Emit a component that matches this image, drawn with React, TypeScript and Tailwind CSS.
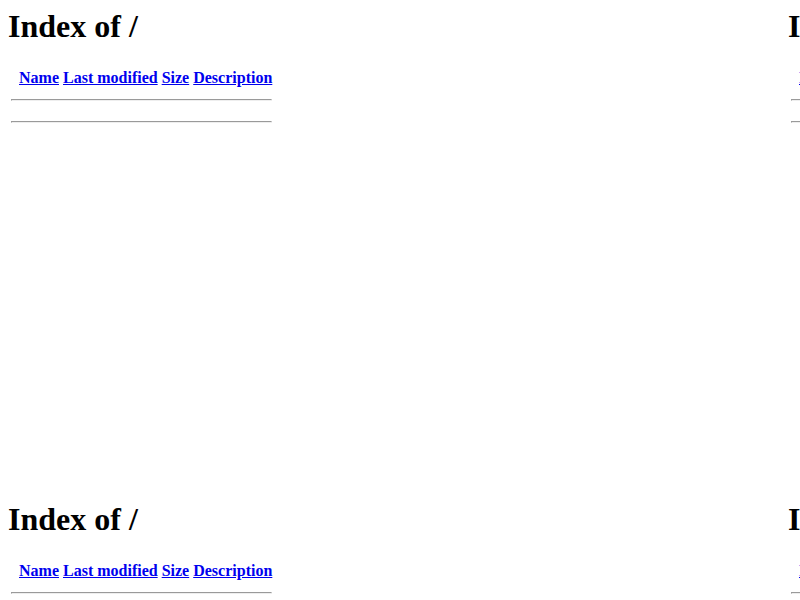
import React from "react";

function Tile() {
  const links = ["Name", "Last modified", "Size", "Description"];
  return (
    <div className="w-[780px] h-[493px] overflow-hidden p-[8px] bg-white text-black font-['Liberation_Serif','Times_New_Roman',serif] text-[16px] leading-[normal]">
      <h1 className="m-0 mb-[21.44px] text-[32px] font-bold leading-[normal]">Index of /</h1>
      <table className="border-separate border-spacing-[2px]">
        <tbody>
          <tr>
            <th className="p-[1px] align-top">
              <div className="w-[4px] h-[1px]" />
            </th>
            {links.map((l) => (
              <th key={l} className="p-[1px] font-bold">
                <a href="#" className="text-[#0000ee] underline">
                  {l}
                </a>
              </th>
            ))}
          </tr>
          <tr>
            <th colSpan={5} className="p-[1px]">
              <hr className="my-[8px] h-0 border border-solid border-t-[#9a9a9a] border-l-[#9a9a9a] border-b-[#eeeeee] border-r-[#eeeeee]" />
            </th>
          </tr>
          <tr>
            <th colSpan={5} className="p-[1px]">
              <hr className="my-[8px] h-0 border border-solid border-t-[#9a9a9a] border-l-[#9a9a9a] border-b-[#eeeeee] border-r-[#eeeeee]" />
            </th>
          </tr>
        </tbody>
      </table>
    </div>
  );
}

export default function App() {
  return (
    <div className="w-[800px] h-[600px] overflow-hidden bg-white">
      <div className="grid grid-cols-[780px_780px] grid-rows-[493px_493px] w-[1560px]">
        <Tile />
        <Tile />
        <Tile />
        <Tile />
      </div>
    </div>
  );
}
